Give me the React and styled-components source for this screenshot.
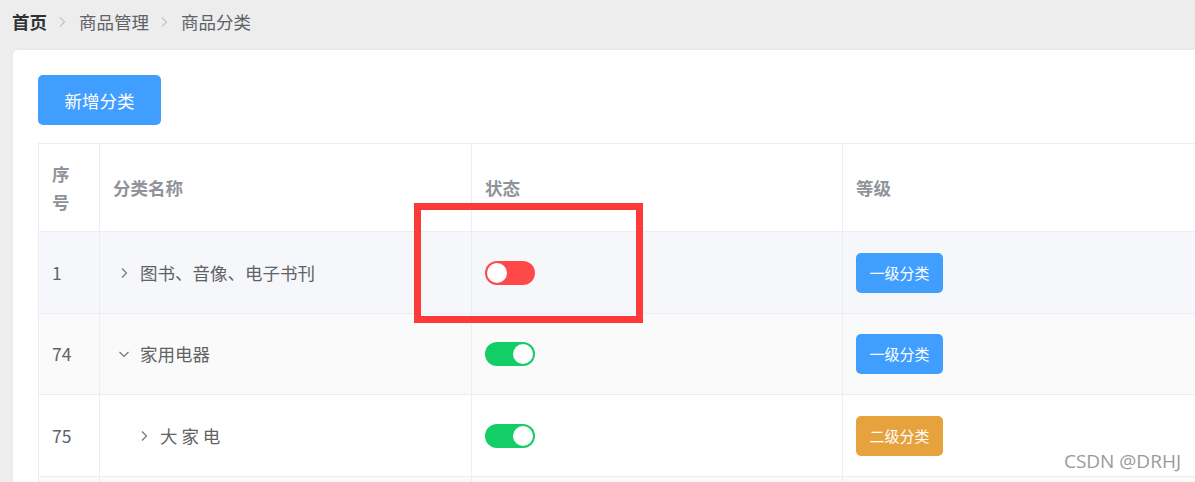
import React from "react";
import styled, { createGlobalStyle } from "styled-components";

const GlobalStyle = createGlobalStyle`
  html, body {
    margin: 0;
    padding: 0;
    background: #ededed;
    overflow: hidden;
    font-family: "Noto Sans CJK SC", "Noto Sans", sans-serif;
  }
`;

const Page = styled.div`
  position: relative;
  width: 1195px;
  height: 482px;
  overflow: hidden;
`;

const Breadcrumb = styled.div`
  display: flex;
  align-items: center;
  height: 20px;
  padding: 12px 0 18px 12px;
  font-size: 17.5px;
  line-height: 20px;
`;

const Crumb = styled.span`
  color: ${(p) => (p.$home ? "#303133" : "#606266")};
  font-weight: ${(p) => (p.$home ? 700 : 400)};
`;

const Sep = styled.span`
  display: flex;
  align-items: center;
  margin: 0 11px 0 9px;
`;

const Card = styled.div`
  margin-left: 13px;
  width: 1300px;
  height: 460px;
  background: #fff;
  border-radius: 5px;
  box-shadow: 0 0 3px rgba(0, 0, 0, 0.05);
  padding: 25px;
  box-sizing: border-box;
`;

const AddButton = styled.button`
  display: block;
  width: 123px;
  height: 50px;
  border: none;
  border-radius: 5px;
  background: #409eff;
  color: #fff;
  font-family: inherit;
  font-size: 17.5px;
  padding: 0;
  margin-bottom: 18px;
`;

const Table = styled.table`
  border-collapse: collapse;
  table-layout: fixed;
  width: 1300px;
  border-top: 1px solid #ebeef5;
  border-left: 1px solid #ebeef5;
`;

const Th = styled.th`
  height: 87px;
  padding: 0 13px;
  text-align: left;
  vertical-align: middle;
  color: #909399;
  font-size: 17.5px;
  line-height: 28px;
  font-weight: 700;
  border-right: 1px solid #ebeef5;
  border-bottom: 1px solid #ebeef5;
`;

const Row = styled.tr`
  background: ${(p) => p.$bg};
`;

const Td = styled.td`
  height: ${(p) => p.$h || 81}px;
  padding: 0 13px;
  vertical-align: middle;
  color: #606266;
  font-size: 17.5px;
  line-height: 24px;
  border-right: 1px solid #ebeef5;
  border-bottom: 1px solid #ebeef5;
`;

const NameCell = styled.div`
  display: flex;
  align-items: center;
  padding-left: ${(p) => p.$indent}px;
`;

const ExpandIcon = styled.span`
  display: flex;
  align-items: center;
  justify-content: center;
  width: 22px;
  margin-right: 5px;
`;

const Switch = styled.span`
  display: flex;
  align-items: center;
  justify-content: ${(p) => (p.$on ? "flex-end" : "flex-start")};
  width: 50px;
  height: 24px;
  padding: 0 2px;
  box-sizing: border-box;
  border-radius: 12px;
  background: ${(p) => (p.$on ? "#13ce66" : "#ff4949")};
`;

const Knob = styled.span`
  width: 20px;
  height: 20px;
  border-radius: 50%;
  background: #fff;
`;

const Tag = styled.span`
  display: inline-flex;
  align-items: center;
  justify-content: center;
  width: 87px;
  height: 40px;
  border-radius: 5px;
  background: ${(p) => (p.$level === 1 ? "#409eff" : "#e6a23c")};
  color: #fff;
  font-size: 15px;
`;

const Highlight = styled.div`
  position: absolute;
  left: 414px;
  top: 203px;
  width: 229px;
  height: 120px;
  box-sizing: border-box;
  border: 7px solid #fd3a3a;
`;

const Watermark = styled.div`
  position: absolute;
  right: 14px;
  top: 448px;
  font-family: "Open Sans", "Noto Sans", sans-serif;
  font-size: 19px;
  color: #9a9a9a;
  text-shadow: 0 0 1px #fff;
`;

const Chevron = ({ dir = "right", color = "#6f7177" }) => (
  <svg width="12" height="12" viewBox="0 0 12 12">
    <path
      d={dir === "right" ? "M4 1.5 L8.5 6 L4 10.5" : "M1.5 4 L6 8.5 L10.5 4"}
      fill="none"
      stroke={color}
      strokeWidth="1.1"
    />
  </svg>
);

const rows = [
  { id: 1, name: "图书、音像、电子书刊", indent: 0, dir: "right", on: false, level: 1, bg: "#f5f7fa", h: 81 },
  { id: 74, name: "家用电器", indent: 0, dir: "down", on: true, level: 1, bg: "#fafafa", h: 80 },
  { id: 75, name: "大 家 电", indent: 20, dir: "right", on: true, level: 2, bg: "#ffffff", h: 81 },
];

const App = () => {
  return (
    <Page>
      <GlobalStyle />
      <Breadcrumb>
        <Crumb $home>首页</Crumb>
        <Sep><Chevron color="#c0c4cc" /></Sep>
        <Crumb>商品管理</Crumb>
        <Sep><Chevron color="#c0c4cc" /></Sep>
        <Crumb>商品分类</Crumb>
      </Breadcrumb>
      <Card>
        <AddButton>新增分类</AddButton>
        <Table>
          <colgroup>
            <col style={{ width: 61 }} />
            <col style={{ width: 372 }} />
            <col style={{ width: 371 }} />
            <col />
          </colgroup>
          <thead>
            <tr>
              <Th>序<br />号</Th>
              <Th>分类名称</Th>
              <Th>状态</Th>
              <Th>等级</Th>
            </tr>
          </thead>
          <tbody>
            {rows.map((r) => (
              <Row key={r.id} $bg={r.bg}>
                <Td $h={r.h}>{r.id}</Td>
                <Td $h={r.h}>
                  <NameCell $indent={r.indent}>
                    <ExpandIcon><Chevron dir={r.dir} /></ExpandIcon>
                    {r.name}
                  </NameCell>
                </Td>
                <Td $h={r.h}>
                  <Switch $on={r.on}><Knob /></Switch>
                </Td>
                <Td $h={r.h}>
                  <Tag $level={r.level}>{r.level === 1 ? "一级分类" : "二级分类"}</Tag>
                </Td>
              </Row>
            ))}
            <Row $bg="#fafafa">
              <Td />
              <Td />
              <Td />
              <Td />
            </Row>
          </tbody>
        </Table>
      </Card>
      <Highlight />
      <Watermark>CSDN @DRHJ</Watermark>
    </Page>
  );
};

export default App;
